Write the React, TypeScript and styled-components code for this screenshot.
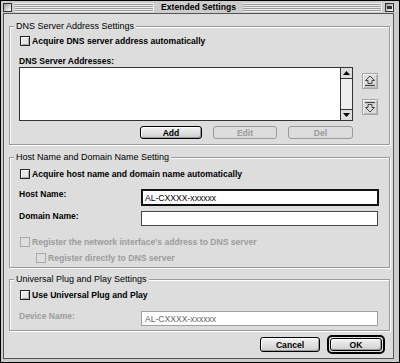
import styled, { createGlobalStyle } from "styled-components";

const GlobalStyle = createGlobalStyle`
  html, body {
    margin: 0;
    padding: 0;
    background: #fff;
  }
  body {
    font-family: "Liberation Sans", Arial, sans-serif;
  }
`;

// window chrome
const Window = styled.div`
  width: 400px;
  height: 363px;
  box-sizing: border-box;
  border: 1px solid #000;
  background: #cccccc;
  padding: 0 5px 3px 2px;
  display: flex;
  flex-direction: column;
`;

const TitleBar = styled.div`
  height: 12px;
  display: flex;
  align-items: center;
  gap: 3px;
`;

const WinBox = styled.span`
  width: 9px;
  height: 9px;
  box-sizing: border-box;
  border: 1px solid #333;
  background: linear-gradient(135deg, #999, #fff);
  flex: none;
  display: flex;
  align-items: center;
  justify-content: center;
`;

const ZoomInner = styled.span`
  width: 5px;
  height: 3px;
  border: 1px solid #333;
  border-top-width: 2px;
  box-sizing: border-box;
`;

const Stripes = styled.span`
  flex: 1;
  height: 9px;
  background: repeating-linear-gradient(to bottom, #eeeeee 0 1px, #9a9a9a 1px 2px);
  border-right: 1px solid #eee;
`;

const Title = styled.span`
  font-weight: bold;
  font-size: 8.6px;
  padding: 0 4px;
  line-height: 11px;
  color: #000;
`;

const Content = styled.div`
  flex: 1;
  border: 1px solid #555;
  background: #dddddd;
  padding: 0 3px 0 5px;
  display: flex;
  flex-direction: column;
`;

// group boxes
const Group = styled.section<{ $top: number; $pt: number; $pb: number }>`
  position: relative;
  margin-top: ${(p) => p.$top}px;
  border: 1px solid #9a9a9a;
  box-shadow: inset 1px 1px 0 #fff, 1px 1px 0 #fff;
  padding: ${(p) => p.$pt}px 9px ${(p) => p.$pb}px 9px;
  display: flex;
  flex-direction: column;
`;

const GroupTitle = styled.h3`
  position: absolute;
  top: -6px;
  left: 4px;
  margin: 0;
  padding: 0 2px;
  background: #dddddd;
  font-size: 9px;
  font-weight: normal;
  line-height: 11px;
  color: #000;
`;

const CheckRow = styled.label<{ $top?: number; $indent?: number; $disabled?: boolean }>`
  display: flex;
  align-items: center;
  gap: 2px;
  height: 12px;
  margin-top: ${(p) => p.$top ?? 0}px;
  margin-left: ${(p) => 1 + (p.$indent ?? 0)}px;
  font-size: 8.6px;
  font-weight: bold;
  color: ${(p) => (p.$disabled ? "#9c9c9c" : "#000")};
`;

const Box = styled.span<{ $disabled?: boolean }>`
  width: 10px;
  height: 10px;
  box-sizing: border-box;
  border: 1px solid ${(p) => (p.$disabled ? "#a8a8a8" : "#222")};
  background: ${(p) => (p.$disabled ? "#dedede" : "#e6e6e6")};
  box-shadow: ${(p) => (p.$disabled ? "none" : "inset 1px 1px 0 #fff, inset -1px -1px 0 #aaa")};
  flex: none;
`;

const FieldLabel = styled.div<{ $top?: number; $disabled?: boolean }>`
  margin-top: ${(p) => p.$top ?? 0}px;
  font-size: 8.5px;
  font-weight: bold;
  line-height: 11px;
  color: ${(p) => (p.$disabled ? "#9c9c9c" : "#000")};
`;

// list with scroller
const ListRow = styled.div`
  display: flex;
  align-items: flex-start;
  gap: 9px;
`;

const ListBox = styled.div`
  width: 334px;
  height: 54px;
  box-sizing: border-box;
  border: 1px solid #333;
  background: #fff;
  display: flex;
  justify-content: flex-end;
`;

const Scroller = styled.div`
  width: 11px;
  border-left: 1px solid #333;
  background: #eeeeee;
  display: flex;
  flex-direction: column;
  justify-content: space-between;
`;

const Arrow = styled.div<{ $up?: boolean }>`
  height: 10px;
  display: flex;
  align-items: center;
  justify-content: center;
  background: #dddddd;
  border-top: ${(p) => (p.$up ? "none" : "1px solid #333")};
  border-bottom: ${(p) => (p.$up ? "1px solid #333" : "none")};
`;

const MoveCol = styled.div`
  display: flex;
  flex-direction: column;
  gap: 10px;
  margin-top: 6px;
`;

const MoveButton = styled.div`
  width: 16px;
  height: 16px;
  box-sizing: border-box;
  border: 1px solid #a5a5a5;
  background: #dcdcdc;
  box-shadow: inset 1px 1px 0 #f4f4f4, inset -1px -1px 0 #b8b8b8;
  display: flex;
  align-items: center;
  justify-content: center;
`;

// buttons
const ButtonRow = styled.div<{ $top: number }>`
  display: flex;
  justify-content: flex-end;
  gap: 11px;
  width: 334px;
  margin-top: ${(p) => p.$top}px;
`;

const PushButton = styled.button<{ $w: number; $h?: number }>`
  width: ${(p) => p.$w}px;
  height: ${(p) => p.$h ?? 13}px;
  box-sizing: border-box;
  padding: 0;
  border: 1px solid #000;
  border-radius: 3px;
  background: linear-gradient(#f2f2f2, #cfcfcf);
  box-shadow: inset 1px 1px 0 #fff, inset -1px -1px 0 #999;
  font-family: "Liberation Sans", Arial, sans-serif;
  font-size: 8.6px;
  font-weight: bold;
  line-height: 10px;
  color: #000;

  &:disabled {
    border-color: #9a9a9a;
    background: #dddddd;
    box-shadow: none;
    color: #9a9a9a;
  }
`;

const DefaultRing = styled.div`
  padding: 1px;
  border: 2px solid #000;
  border-radius: 5px;
  display: flex;
`;

const Footer = styled.div`
  margin-top: 4px;
  display: flex;
  justify-content: flex-end;
  align-items: center;
  gap: 7px;
  padding-right: 5px;
`;

// text fields
const FieldRow = styled.div<{ $top: number }>`
  display: flex;
  align-items: flex-start;
  margin-top: ${(p) => p.$top}px;
`;

const LabelCell = styled(FieldLabel)`
  width: 122px;
  flex: none;
`;

const TextField = styled.input<{ $focused?: boolean; $h: number; $w: number }>`
  width: ${(p) => p.$w}px;
  height: ${(p) => p.$h}px;
  box-sizing: border-box;
  margin: 0;
  padding: 0 0 0 ${(p) => (p.$focused ? 2 : 3)}px;
  border: ${(p) => (p.$focused ? "2px solid #111" : "1px solid #444")};
  background: #fff;
  font-family: "Liberation Sans", Arial, sans-serif;
  font-size: 8.6px;
  color: #000;
  outline: none;

  &:disabled {
    border-color: #a0a0a0;
    color: #666;
    background: #fff;
  }
`;

const Checkbox = ({ label, top, indent, disabled }: { label: string; top?: number; indent?: number; disabled?: boolean }) => (
  <CheckRow $top={top} $indent={indent} $disabled={disabled}>
    <Box $disabled={disabled} />
    <span>{label}</span>
  </CheckRow>
);

const Tri = ({ down }: { down?: boolean }) => (
  <svg width="7" height="4" viewBox="0 0 7 4">
    <polygon points={down ? "0,0 7,0 3.5,4" : "0,4 7,4 3.5,0"} fill="#000" />
  </svg>
);

const MoveIcon = ({ down }: { down?: boolean }) => (
  <svg width="12" height="12" viewBox="0 0 12 12">
    {down ? (
      <>
        <line x1="1" y1="1.5" x2="11" y2="1.5" stroke="#444" strokeWidth="1.2" />
        <polygon points="6,11 10.5,6.5 8,6.5 8,3.5 4,3.5 4,6.5 1.5,6.5" fill="none" stroke="#444" strokeWidth="1" />
      </>
    ) : (
      <>
        <polygon points="6,1 10.5,5.5 8,5.5 8,8.5 4,8.5 4,5.5 1.5,5.5" fill="none" stroke="#444" strokeWidth="1" />
        <line x1="1" y1="10.5" x2="11" y2="10.5" stroke="#444" strokeWidth="1.2" />
      </>
    )}
  </svg>
);

const App = () => {
  return (
    <>
      <GlobalStyle />
      <Window>
        <TitleBar>
          <WinBox />
          <Stripes />
          <Title>Extended Settings</Title>
          <Stripes />
          <WinBox>
            <ZoomInner />
          </WinBox>
        </TitleBar>
        <Content>
          <Group $top={12} $pt={8} $pb={5}>
            <GroupTitle>DNS Server Address Settings</GroupTitle>
            <Checkbox label="Acquire DNS server address automatically" />
            <FieldLabel $top={9}>DNS Server Addresses:</FieldLabel>
            <ListRow>
              <ListBox>
                <Scroller>
                  <Arrow $up>
                    <Tri />
                  </Arrow>
                  <Arrow>
                    <Tri down />
                  </Arrow>
                </Scroller>
              </ListBox>
              <MoveCol>
                <MoveButton>
                  <MoveIcon />
                </MoveButton>
                <MoveButton>
                  <MoveIcon down />
                </MoveButton>
              </MoveCol>
            </ListRow>
            <ButtonRow $top={5}>
              <PushButton $w={62}>Add</PushButton>
              <PushButton $w={64} disabled>
                Edit
              </PushButton>
              <PushButton $w={65} disabled>
                Del
              </PushButton>
            </ButtonRow>
          </Group>

          <Group $top={12} $pt={10} $pb={3}>
            <GroupTitle>Host Name and Domain Name Setting</GroupTitle>
            <Checkbox label="Acquire host name and domain name automatically" />
            <FieldRow $top={9}>
              <LabelCell>Host Name:</LabelCell>
              <TextField $focused $h={17} $w={238} defaultValue="AL-CXXXX-xxxxxx" />
            </FieldRow>
            <FieldRow $top={5}>
              <LabelCell>Domain Name:</LabelCell>
              <TextField $h={15} $w={237} defaultValue="" />
            </FieldRow>
            <Checkbox label="Register the network interface's address to DNS server" top={10} disabled />
            <Checkbox label="Register directly to DNS server" top={4} indent={16} disabled />
          </Group>

          <Group $top={11} $pt={9} $pb={4}>
            <GroupTitle>Universal Plug and Play Settings</GroupTitle>
            <Checkbox label="Use Universal Plug and Play" />
            <FieldRow $top={10}>
              <LabelCell $disabled>Device Name:</LabelCell>
              <TextField $h={15} $w={237} disabled defaultValue="AL-CXXXX-xxxxxx" />
            </FieldRow>
          </Group>

          <Footer>
            <PushButton $w={60} $h={15}>
              Cancel
            </PushButton>
            <DefaultRing>
              <PushButton $w={52} $h={13}>
                OK
              </PushButton>
            </DefaultRing>
          </Footer>
        </Content>
      </Window>
    </>
  );
};

export default App;
